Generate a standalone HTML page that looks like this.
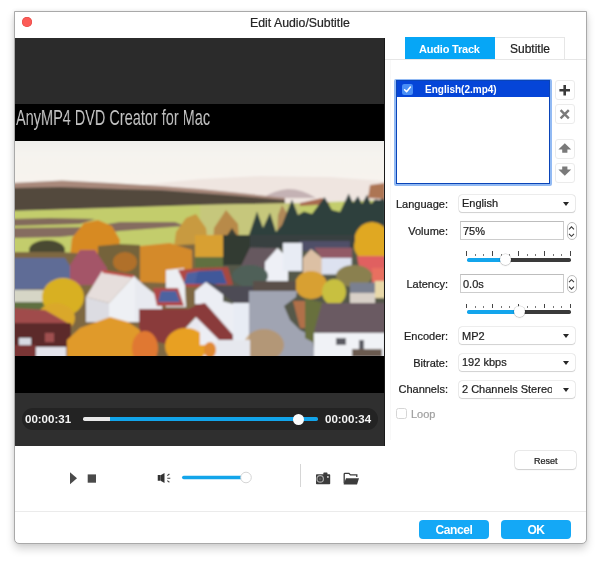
<!DOCTYPE html>
<html><head><meta charset="utf-8">
<style>
*{box-sizing:border-box;margin:0;padding:0}
html,body{width:600px;height:561px;overflow:hidden;background:#fff;font-family:"Liberation Sans",sans-serif;color:#222}
.t,.lbl,.pop span,.tf span,.bb span{-webkit-text-stroke:0.22px currentColor;will-change:transform}
.nb{-webkit-text-stroke:0 !important}
.a{position:absolute}
#win{position:absolute;left:14px;top:11px;width:573px;height:533px;background:#fff;border:1px solid #a9a9a9;border-radius:0 0 5px 5px;box-shadow:0 5px 9px rgba(0,0,0,0.17),0 0 4px rgba(0,0,0,0.08)}
.t{position:absolute;white-space:nowrap;line-height:14px}
.lbl{position:absolute;font-size:11px;color:#1e1e1e;text-align:right;width:80px;line-height:14px;left:368px}
.pop{position:absolute;left:459px;width:116px;height:17px;background:#fff;border-radius:3px;box-shadow:0 0 0 0.6px rgba(0,0,0,0.13),0 0.7px 1px rgba(0,0,0,0.13)}
.pop span{position:absolute;left:3px;top:1.5px;font-size:11px;line-height:14px;color:#1e1e1e;white-space:nowrap;overflow:hidden;width:89.5px}
.pop i{position:absolute;right:6px;top:7px;width:0;height:0;border-left:3.6px solid transparent;border-right:3.6px solid transparent;border-top:4.4px solid #262626}
.tf{position:absolute;left:460px;width:104px;height:18.5px;border:1px solid #cdcdcd;border-top-color:#bdbdbd;background:#fff}
.tf span{position:absolute;left:2px;top:1.5px;font-size:11px;line-height:14px;color:#1e1e1e}
.step{position:absolute;left:566.5px;width:10.5px;height:18px;border-radius:5.25px;border:1px solid #bdbdbd;background:#fff}
.sbtn{position:absolute;left:555px;width:20px;height:20px;border:1px solid #ebebeb;border-radius:3px;background:#fff}
.bb{position:absolute;top:520px;width:70px;height:19px;background:#14a8f6;border-radius:4px}
.bb span{-webkit-text-stroke:0 !important;position:absolute;left:0;width:100%;top:2.5px;text-align:center;font-size:12px;font-weight:bold;letter-spacing:-0.4px;color:#fff;line-height:14px}
.tick{position:absolute;width:1.3px;background:#555}
</style></head><body>
<div id="win"></div>
<!-- title -->
<div class="a" style="left:22px;top:17px;width:10px;height:10px;border-radius:50%;background:#fc5b57;box-shadow:0 0 0 0.5px #e0443f inset"></div>
<div class="t" style="left:250px;top:15.5px;font-size:12.3px;color:#262626">Edit Audio/Subtitle</div>
<!-- video -->
<div class="a" style="left:15px;top:38px;width:370px;height:66px;background:#2b2b2b"></div>
<div class="a" style="left:15px;top:104px;width:370px;height:37px;background:#000;overflow:hidden">
  <div class="t" style="left:1.2px;top:1px;font-size:21.5px;line-height:26px;color:#c4c4c4;-webkit-text-stroke:0;transform:scaleX(0.674);transform-origin:left top">AnyMP4 DVD Creator for Mac</div>
</div>
<div class="a" style="left:15px;top:141px;width:370px;height:215px;overflow:hidden;background:#999">
<svg width="370" height="215" viewBox="15 141 370 215" style="position:absolute;left:0;top:0">
<defs>
<linearGradient id="sky" x1="0" y1="0" x2="0" y2="1"><stop offset="0" stop-color="#ececea"/><stop offset="0.25" stop-color="#f5f3ef"/><stop offset="1" stop-color="#f9f4ee"/></linearGradient>
<filter id="bl" x="-5%" y="-5%" width="110%" height="110%"><feGaussianBlur stdDeviation="0.8"/></filter>
</defs>
<g filter="url(#bl)">
<rect x="10" y="136" width="380" height="65" fill="url(#sky)"/>
<polygon points="130,186 200,179 260,176 330,177 385,181 385,205 130,205" fill="#efe5e0"/>
<path d="M262 198 Q275 190 288 189 Q302 189 316 198 Z" fill="#c4b2b4"/>
<polygon points="10,183 62,180.5 110,183 160,186 200,189 240,193 285,198 285,210 10,210" fill="#a8887a"/>
<polygon points="10,188 60,187 120,189 160,190 200,193 240,196 285,200 285,203.5 200,205 140,207 10,211" fill="#524a3e"/>
<polygon points="10,211 140,207 200,205 285,203.5 385,200 385,262 10,262" fill="#c3cd6c"/>
<polygon points="200,205 285,203.5 300,203 300,240 200,240" fill="#c6c77c"/>
<polygon points="10,219 50,218 95,219 80,224 10,226" fill="#826a5c"/>
<polygon points="10,228 90,227 120,222 175,222 185,226 120,231 60,237 10,238" fill="#856c60"/>
<ellipse cx="47" cy="250" rx="18" ry="10" fill="#4a4a30"/>
<polygon points="70,256 72,238 84,223 98,220 112,226 120,240 118,256" fill="#d78a22"/>
<polygon points="172,262 176,232 186,218 196,214 206,228 210,262" fill="#c89a40"/>
<polygon points="212,258 214,228 226,210 238,224 240,258" fill="#b88a48"/>
<polygon points="220,268 224,240 232,228 240,240 244,268" fill="#3a4036"/>
<polygon points="300,203 322,198 330,204 300,206" fill="#a86a50"/>
<polygon points="276,262 278,215 282,205 288,215 290,262" fill="#b08858"/>
<polygon points="245,262 249,235 257,211.6 263,228 270,212.8 276,232 282,225 292,199.5 298,215 304,211.6 312,214 324.5,197 332,210 340,212 348.7,193.5 353,203 358,196 362,204 367,194.7 371,204 375,199.5 380,200 385,196 385,262" fill="#2f3f3c"/>
<polygon points="370,185 385,183 385,199 368,198" fill="#ad7452"/>
<ellipse cx="372" cy="242" rx="18" ry="20" fill="#e0a822"/>
<!-- ===== lower left ===== -->
<polygon points="10,252 60,252 120,256 160,246 200,244 200,360 10,360" fill="#7e6842"/>
<rect x="200" y="244" width="190" height="116" fill="#55584a"/>
<polygon points="98,246 120,244 140,245 140,278 98,272" fill="#74643a"/>
<polygon points="140,246 170,243 192,250 192,284 140,282" fill="#d48a2a"/>
<ellipse cx="125" cy="262" rx="12" ry="10" fill="#b0702a"/>
<polygon points="10,258 65,258 79,281 46,289 10,290" fill="#5e6c96"/>
<rect x="10" y="290" width="36" height="12" fill="#d6d6c6"/>
<rect x="10" y="302" width="50" height="10" fill="#5e7040"/>
<polygon points="80,250 95,250 107,268 107,285 70,285 70,265" fill="#a45468"/>
<polygon points="166,270 184,268 186,307 166,307" fill="#eceef2"/>
<polygon points="178,270 200,268 200,287 186,287" fill="#b04a44"/>
<polygon points="184,284 187,273 200,271 200,284" fill="#4e62a0"/>
<ellipse cx="63" cy="297" rx="21" ry="19" fill="#d8b022"/>
<ellipse cx="56" cy="318" rx="19" ry="15" fill="#daa82c"/>
<polygon points="102,271 134,276 109,303 86,297" fill="#e6dedc"/>
<polygon points="102,270 134,275 135,278 103,273" fill="#c0504a"/>
<polygon points="134,276 142,284 142,322 109,322 109,303" fill="#eef0f4"/>
<polygon points="86,297 109,303 109,322 86,322" fill="#dcdce2"/>
<polygon points="135,278 162,300 162,322 135,322" fill="#e8eaf0"/>
<polygon points="153,288 178,288 184,306 157,306" fill="#b04848"/>
<polygon points="158,302 161,291 176,291 180,302" fill="#4d64a0"/>
<polygon points="10,308 45,310 73,326 10,326" fill="#a04c4c"/>
<rect x="10" y="323" width="61" height="24" fill="#5c2c2c"/>
<rect x="19" y="338" width="12" height="9" fill="#d8dce4"/>
<rect x="45" y="333" width="9" height="9" fill="#a05050"/>
<rect x="36" y="347" width="30" height="12" fill="#e4e4ec"/>
<rect x="10" y="345" width="26" height="14" fill="#7a3434"/>
<polygon points="139,309 189,309 197,305 233,341 225,346 197,315 170,345 139,337" fill="#8a3a3a"/>
<polygon points="197,316 222,342 222,360 170,360 170,345" fill="#e8e8f0"/>
<polygon points="67,340 80,328 110,317 128,322 140,330 140,360 67,360" fill="#e09a2a"/>
<ellipse cx="186" cy="346" rx="21" ry="18" fill="#e8a022"/>
<ellipse cx="145" cy="348" rx="13" ry="17" fill="#e07830"/>
<!-- ===== lower right ===== -->
<polygon points="195,235 223,235 223,258 195,258" fill="#d8a030"/>
<rect x="195" y="257" width="28" height="11" fill="#607040"/>
<rect x="223" y="235" width="27" height="30" fill="#323a32"/>
<rect x="250" y="235" width="105" height="13" fill="#384040"/>
<polygon points="299,241 350,241 350,251 299,251" fill="#505068"/>
<polygon points="250,247.5 277,248.3 266,270 240,268" fill="#66585e"/>
<polygon points="265,262 277.5,248 288,258 288,281 265,281" fill="#eef0f6"/>
<rect x="283" y="243" width="19" height="28" fill="#e8ecf4"/>
<polygon points="303,258 311,249 322,258 322,274.5 303,274.5" fill="#dcc0a4"/>
<polygon points="314,247.7 352,247.7 352,258.7 322,258.7" fill="#925a66"/>
<rect x="321.6" y="258" width="30" height="16.5" fill="#dde2f0"/>
<ellipse cx="372" cy="246" rx="18" ry="16" fill="#e0a820"/>
<polygon points="357,256 385,256 385,273 360,273" fill="#e06060"/>
<rect x="372" y="268" width="13" height="15" fill="#e87060"/>
<rect x="375" y="281" width="10" height="17" fill="#e8d8a8"/>
<ellipse cx="354" cy="276" rx="18" ry="11" fill="#8a8050"/>
<ellipse cx="311" cy="285" rx="16" ry="14" fill="#d8a030"/>
<ellipse cx="334" cy="292" rx="12" ry="13" fill="#c8c040"/>
<rect x="350" y="282.5" width="25" height="11" fill="#7a8090"/>
<rect x="350" y="293" width="25" height="10" fill="#d8d0c8"/>
<ellipse cx="250" cy="276" rx="18" ry="11" fill="#506058"/>
<polygon points="195,285 200,268 228,267 233,285" fill="#a84840"/>
<polygon points="195,284 198,271 222,270 227,284" fill="#40589a"/>
<polygon points="253,281 296,281 296,291 253,291" fill="#5a5048"/>
<polygon points="195,291 206,282 223,290 223,304 195,304" fill="#eceef4"/>
<polygon points="206,282 222,286 253,286 253,303 237,305" fill="#4e4c54"/>
<polygon points="200,304 218,300 237,305 237,345 200,345" fill="#eceef4"/>
<polygon points="195,305 205,303 235,337 233,345 225,346 195,316" fill="#8a3a3a"/>
<rect x="233" y="303" width="17" height="44" fill="#e8ecf4"/>
<polygon points="249,291 297,291 296,297 284,306 290,320 300,330 312,336 316,360 249,360" fill="#a0a4b2"/>
<polygon points="293,301 310,301 312,328 300,328" fill="#b07048"/>
<polygon points="305,298 324,303 316,332 318,345 305,338" fill="#68703e"/>
<polygon points="322,303 385,303 385,337 314,332" fill="#6a5a62"/>
<rect x="314" y="333" width="71" height="27" fill="#f0f2f6"/>
<rect x="336" y="338" width="10" height="7" fill="#5a5a62"/>
<rect x="359" y="340" width="5" height="10" fill="#5a5a62"/>
<rect x="352" y="349" width="30" height="8" fill="#6a5a50"/>
<ellipse cx="264" cy="345" rx="20" ry="16" fill="#c09050" opacity="0.6"/>
<rect x="216" y="340" width="34" height="20" fill="#e6e8ee"/>
<ellipse cx="210" cy="350" rx="6" ry="8" fill="#e08a30"/>
</g>
</svg>
</div>
<div class="a" style="left:15px;top:356px;width:370px;height:37px;background:#000"></div>
<div class="a" style="left:15px;top:393px;width:370px;height:53px;background:#2f2f2f"></div>
<div class="a" style="left:384px;top:38px;width:1px;height:408px;background:#1a1a1a"></div>
<div class="a" style="left:22px;top:408px;width:356px;height:22px;border-radius:11px;background:#232323"></div>
<div class="t nb" style="left:25px;top:411.7px;font-size:11.5px;font-weight:bold;color:#f4f4f4">00:00:31</div>
<div class="a" style="left:82.5px;top:417.2px;width:28px;height:3.4px;background:#e8e8e8;border-radius:1.7px 0 0 1.7px"></div>
<div class="a" style="left:110px;top:417.2px;width:208px;height:3.4px;background:#12a4ea;border-radius:0 1.7px 1.7px 0"></div>
<div class="a" style="left:292.5px;top:413.5px;width:11px;height:11px;border-radius:50%;background:#fbfbfb"></div>
<div class="t nb" style="left:324.5px;top:411.7px;font-size:11.5px;font-weight:bold;color:#f4f4f4">00:00:34</div>
<!-- bottom controls -->
<svg class="a" style="left:0;top:460px" width="400" height="40" viewBox="0 460 400 40">
  <polygon points="70,472.3 70,484.3 77,478.3" fill="#4a4a4a"/>
  <rect x="87.7" y="474.4" width="8.3" height="8.3" fill="#4a4a4a"/>
  <rect x="157.75" y="475" width="3" height="5.75" fill="#333"/>
  <polygon points="161,475 164.5,473 164.5,483 161,481" fill="#333"/>
  <path d="M167.3 475.6 L169.4 474 M167.3 478.2 H170.3 M167.3 480.6 L169.4 482.2" stroke="#444" stroke-width="1.1" fill="none"/>
  <rect x="182" y="475.8" width="64" height="3.4" rx="1.7" fill="#13a5ea"/>
  <circle cx="246" cy="477.5" r="5.3" fill="#fff" stroke="#d0d0d0" stroke-width="0.9"/>
  <rect x="300" y="464" width="1" height="23" fill="#d6d6d6"/>
  <rect x="323.3" y="472.6" width="4.2" height="2.4" rx="0.8" fill="#3c3c3c"/>
  <rect x="316" y="474.2" width="14.2" height="10.1" rx="0.8" fill="#3c3c3c"/>
  <circle cx="320.2" cy="478.9" r="3.2" fill="none" stroke="#a8a8a8" stroke-width="1.2"/>
  <circle cx="320.2" cy="478.9" r="1.4" fill="#5a5a5a"/>
  <circle cx="327.9" cy="476.9" r="0.9" fill="#e8e8e8"/>
  <path d="M344.2 483.5 V474.2 Q344.2 473.4 345 473.4 H349 L350.4 474.9 H356.8 V477" stroke="#3c3c3c" stroke-width="1.3" fill="none"/>
  <polygon points="346,478.2 359,478.2 357,484.4 343.6,484.4" fill="#3c3c3c"/>
</svg>
<!-- right panel -->
<div class="a" style="left:389.5px;top:59px;width:1px;height:381px;background:#f8f8f8"></div>
<div class="a" style="left:385px;top:59px;width:201px;height:1px;background:#e6e6e6"></div>
<div class="a" style="left:404.5px;top:37.2px;width:90px;height:21.8px;background:#06a6f6"></div>
<div class="t nb" style="left:418.5px;top:41.5px;font-size:11px;font-weight:bold;color:#fff;letter-spacing:-0.2px">Audio Track</div>
<div class="a" style="left:494.5px;top:37.2px;width:70.5px;height:22px;border:1px solid #e6e6e6;border-left:none;border-bottom:none"></div>
<div class="t" style="left:509.5px;top:41.5px;font-size:12px;color:#222">Subtitle</div>
<!-- list -->
<div class="a" style="left:393.5px;top:78.5px;width:158.5px;height:107px;border:2.2px solid #92baf3;border-radius:2px"></div>
<div class="a" style="left:395.5px;top:80px;width:154.5px;height:104px;border:1px solid #0a44b8;background:#fff"></div>
<div class="a" style="left:396.5px;top:80.5px;width:152.5px;height:16px;background:#0545d8"></div>
<div class="a" style="left:402.3px;top:83.5px;width:11px;height:11px;border-radius:2.2px;background:#4a8ff6"></div>
<svg class="a" style="left:402.3px;top:83.5px" width="11" height="11" viewBox="0 0 11 11"><path d="M2.6 5.7 L4.6 7.8 L8.4 3" stroke="#fff" stroke-width="1.5" fill="none" stroke-linecap="round" stroke-linejoin="round"/></svg>
<div class="t nb" style="left:424.5px;top:82.5px;font-size:10px;font-weight:bold;color:#fff">English(2.mp4)</div>
<div class="sbtn" style="top:80.4px"></div>
<div class="sbtn" style="top:104.4px"></div>
<div class="sbtn" style="top:138.5px"></div>
<div class="sbtn" style="top:163.3px"></div>
<svg class="a" style="left:550px;top:75px" width="30" height="115" viewBox="550 75 30 115">
  <path d="M559.4 90.3 H570 M564.7 85 V95.6" stroke="#3a3a3a" stroke-width="2.6"/>
  <path d="M560.6 110.2 L568.8 118.4 M568.8 110.2 L560.6 118.4" stroke="#7a7a7a" stroke-width="2.4"/>
  <polygon points="558.4,149.6 564.8,143.2 571.2,149.6 567.4,149.6 567.4,152.8 562.2,152.8 562.2,149.6" fill="#7a7a7a"/>
  <polygon points="558.4,169.4 562.2,169.4 562.2,166.4 567.4,166.4 567.4,169.4 571.2,169.4 564.8,175.8" fill="#7a7a7a"/>
</svg>
<!-- form -->
<div class="lbl" style="top:197px">Language:</div>
<div class="pop" style="top:194.8px"><span>English</span><i></i></div>
<div class="lbl" style="top:223.5px">Volume:</div>
<div class="tf" style="top:221.4px"><span>75%</span></div>
<div class="step" style="top:222.1px"></div>
<div class="lbl" style="top:277px">Latency:</div>
<div class="tf" style="top:274.3px"><span>0.0s</span></div>
<div class="step" style="top:275px"></div>
<svg class="a" style="left:455px;top:240px" width="130" height="80" viewBox="455 240 130 80">
  <path d="M568.9 227 L571.5 224.6 L574.1 227 M568.9 233.8 L571.5 236.3 L574.1 233.8" stroke="#333" stroke-width="1" fill="none" transform="translate(0,0)"/>
</svg>
<div class="lbl" style="top:329px">Encoder:</div>
<div class="pop" style="top:327.3px"><span>MP2</span><i></i></div>
<div class="lbl" style="top:355.5px">Bitrate:</div>
<div class="pop" style="top:353.5px"><span>192 kbps</span><i></i></div>
<div class="lbl" style="top:382.2px">Channels:</div>
<div class="pop" style="top:380.6px"><span>2 Channels Stereo</span><i></i></div>
<div class="a" style="left:396px;top:408.3px;width:11px;height:11px;border:1px solid #d6d6d6;border-radius:2.5px;background:#fff"></div>
<div class="t" style="left:411px;top:407px;font-size:11px;color:#a0a0a0">Loop</div>
<div class="a" style="left:514.5px;top:451.2px;width:61.3px;height:17.8px;border-radius:3.5px;background:#fff;box-shadow:0 0 0 0.6px rgba(0,0,0,0.14),0 0.8px 1.2px rgba(0,0,0,0.14)"></div>
<div class="t" style="left:514.5px;top:453.5px;width:61.3px;text-align:center;font-size:9px;color:#222">Reset</div>
<div class="a" style="left:15px;top:510.5px;width:571px;height:1px;background:#ebebeb"></div>
<div class="bb" style="left:419px"><span>Cancel</span></div>
<div class="bb" style="left:501px"><span>OK</span></div>
<div class="tick" style="left:465.70px;top:251.45px;width:1.6px;height:4.5px;background:#444"></div>
<div class="tick" style="left:474.57px;top:253.95px;width:1.2px;height:2px;background:#777"></div>
<div class="tick" style="left:483.23px;top:253.95px;width:1.2px;height:2px;background:#777"></div>
<div class="tick" style="left:491.70px;top:251.45px;width:1.6px;height:4.5px;background:#444"></div>
<div class="tick" style="left:500.57px;top:253.95px;width:1.2px;height:2px;background:#777"></div>
<div class="tick" style="left:509.23px;top:253.95px;width:1.2px;height:2px;background:#777"></div>
<div class="tick" style="left:517.70px;top:251.45px;width:1.6px;height:4.5px;background:#444"></div>
<div class="tick" style="left:526.57px;top:253.95px;width:1.2px;height:2px;background:#777"></div>
<div class="tick" style="left:535.23px;top:253.95px;width:1.2px;height:2px;background:#777"></div>
<div class="tick" style="left:543.70px;top:251.45px;width:1.6px;height:4.5px;background:#444"></div>
<div class="tick" style="left:552.57px;top:253.95px;width:1.2px;height:2px;background:#777"></div>
<div class="tick" style="left:561.23px;top:253.95px;width:1.2px;height:2px;background:#777"></div>
<div class="tick" style="left:569.70px;top:251.45px;width:1.6px;height:4.5px;background:#444"></div>
<div class="a" style="left:466.5px;top:258.05px;width:39.0px;height:3.5px;border-radius:1.7px;background:#13a5ec"></div>
<div class="a" style="left:505.5px;top:258.05px;width:65.0px;height:3.5px;border-radius:1.7px;background:#3a3a3a"></div>
<div class="a" style="left:500.00px;top:254.25px;width:11px;height:11px;border-radius:50%;background:#fff;box-shadow:0 0 0 0.6px rgba(0,0,0,0.15),0 0.6px 1.2px rgba(0,0,0,0.25)"></div>
<div class="tick" style="left:465.70px;top:303.50px;width:1.6px;height:4.5px;background:#444"></div>
<div class="tick" style="left:474.57px;top:306.00px;width:1.2px;height:2px;background:#777"></div>
<div class="tick" style="left:483.23px;top:306.00px;width:1.2px;height:2px;background:#777"></div>
<div class="tick" style="left:491.70px;top:303.50px;width:1.6px;height:4.5px;background:#444"></div>
<div class="tick" style="left:500.57px;top:306.00px;width:1.2px;height:2px;background:#777"></div>
<div class="tick" style="left:509.23px;top:306.00px;width:1.2px;height:2px;background:#777"></div>
<div class="tick" style="left:517.70px;top:303.50px;width:1.6px;height:4.5px;background:#444"></div>
<div class="tick" style="left:526.57px;top:306.00px;width:1.2px;height:2px;background:#777"></div>
<div class="tick" style="left:535.23px;top:306.00px;width:1.2px;height:2px;background:#777"></div>
<div class="tick" style="left:543.70px;top:303.50px;width:1.6px;height:4.5px;background:#444"></div>
<div class="tick" style="left:552.57px;top:306.00px;width:1.2px;height:2px;background:#777"></div>
<div class="tick" style="left:561.23px;top:306.00px;width:1.2px;height:2px;background:#777"></div>
<div class="tick" style="left:569.70px;top:303.50px;width:1.6px;height:4.5px;background:#444"></div>
<div class="a" style="left:466.5px;top:310.10px;width:52.5px;height:3.5px;border-radius:1.7px;background:#13a5ec"></div>
<div class="a" style="left:519.0px;top:310.10px;width:51.5px;height:3.5px;border-radius:1.7px;background:#3a3a3a"></div>
<div class="a" style="left:513.50px;top:306.30px;width:11px;height:11px;border-radius:50%;background:#fff;box-shadow:0 0 0 0.6px rgba(0,0,0,0.15),0 0.6px 1.2px rgba(0,0,0,0.25)"></div>
<svg class="a" style="left:560px;top:215px" width="25" height="85" viewBox="560 215 25 85">
<path d="M569 229.3 L571.5 226.8 L574 229.3 M569 233.8 L571.5 236.3 L574 233.8" stroke="#3a3a3a" stroke-width="1.1" fill="none"/>
<path d="M569 282.2 L571.5 279.7 L574 282.2 M569 286.7 L571.5 289.2 L574 286.7" stroke="#3a3a3a" stroke-width="1.1" fill="none"/>
</svg>
</body></html>
